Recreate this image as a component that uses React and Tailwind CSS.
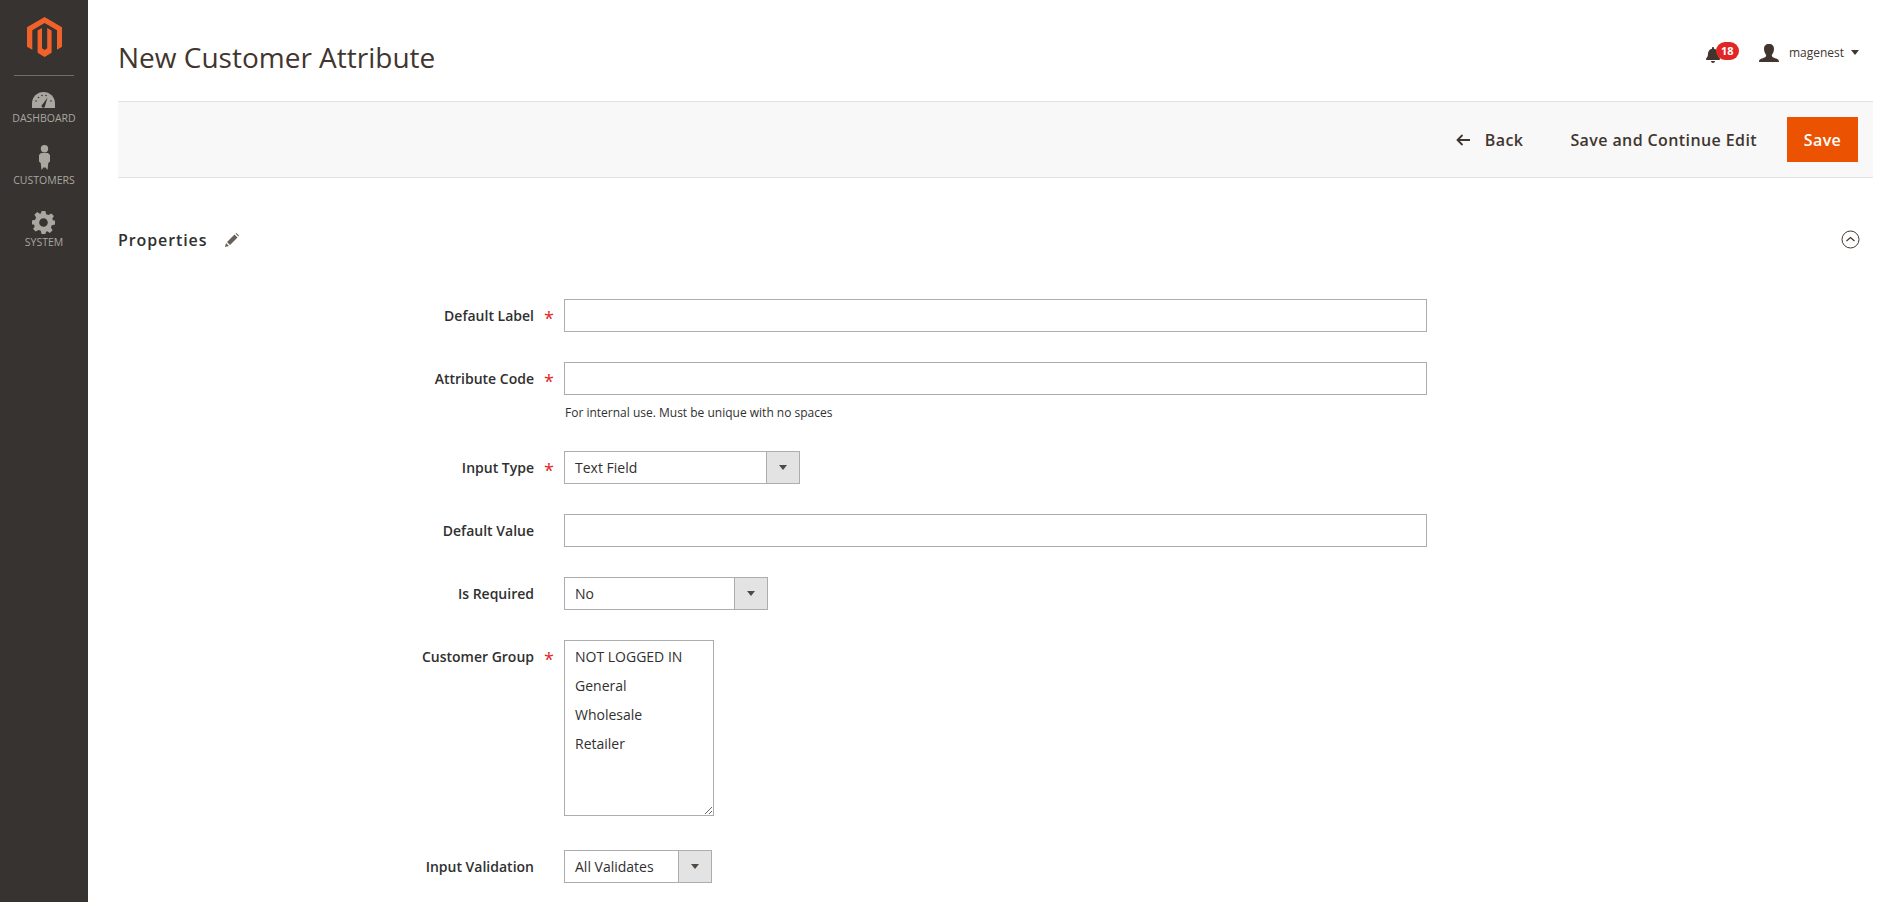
import { FaBell } from "react-icons/fa";

function Label({ text, required }) {
  return (
    <div className="w-[564px] shrink-0 flex justify-end h-[33px] items-center">
      <span className="text-[14px] font-semibold text-[#303030]">{text}</span>
      <span className="w-[30px] pt-[6px] text-[#e22626] text-[18px] text-center leading-[27px]">{required ? "*" : ""}</span>
    </div>
  );
}

function Select({ value, width }) {
  return (
    <div className={`flex h-[33px] border border-[#adadad] bg-white ${width}`}>
      <div className="flex-1 pl-[10px] text-[14px] leading-[31px] text-[#303030]">{value}</div>
      <div className="w-[33px] border-l border-[#adadad] bg-[#e3e3e3] flex items-center justify-center">
        <div className="w-0 h-0 border-x-[4px] border-x-transparent border-t-[5px] border-t-[#514943]" />
      </div>
    </div>
  );
}

function Row({ text, required, children, className }) {
  return (
    <div className={`flex ${className}`}>
      <Label text={text} required={required} />
      {children}
    </div>
  );
}

function NavItem({ icon, label, className }) {
  return (
    <div className={`flex flex-col items-center ${className}`}>
      {icon}
      <span className="text-[10.5px] leading-[14px] text-[#aaa6a0] uppercase">{label}</span>
    </div>
  );
}

const Input = () => <input className="w-[863px] h-[33px] border border-[#adadad] bg-white outline-none" />;

export default function App() {
  return (
    <div className="flex h-[902px] overflow-hidden bg-white font-['Open_Sans',sans-serif] text-[#303030]">
      <aside className="w-[88px] shrink-0 bg-[#373330] flex flex-col items-center">
        <svg className="mt-[17px]" width="35" height="40" viewBox="0 0 35 40" fill="#f1622a">
          <polygon points="17.6,0 35,10.3 35,29.7 30,32.7 30,13.3 17.6,6 5.3,13.3 5.3,32.7 0,29.7 0,10.3" />
          <polygon points="10.6,13.6 15,11 15,31.3 17.6,33 20.2,31.3 20.2,11 24.6,13.6 24.6,35.7 17.6,40 10.6,35.7" />
        </svg>
        <div className="w-[60px] h-px bg-[#736e69] mt-[18px]" />
        <NavItem
          className="mt-[16px]"
          label="Dashboard"
          icon={
            <svg width="23" height="16" viewBox="0 0 23 16" className="mb-[3px]">
              <path d="M0 16V11.5A11.5 11.5 0 0 1 23 11.5V16Z" fill="#aaa6a0" />
              <path d="M9.8 13.5L15.5 5.5L12.8 14.8Z" fill="#373330" />
              <circle cx="11.3" cy="14" r="1.8" fill="#373330" />
              <g fill="#373330">
                <circle cx="4" cy="9" r=".8" />
                <circle cx="6.5" cy="5.5" r=".8" />
                <circle cx="10" cy="3.5" r=".8" />
                <circle cx="14" cy="3.5" r=".8" />
                <circle cx="19" cy="9" r=".8" />
              </g>
            </svg>
          }
        />
        <NavItem
          className="mt-[20px]"
          label="Customers"
          icon={
            <svg width="11" height="25" viewBox="0 0 11 25" fill="#aaa6a0" className="mb-[3px]">
              <circle cx="5.5" cy="3.7" r="3.7" />
              <path d="M2 8H9L11 10V16.5L9.3 18L8.5 25L6.5 22.5H4.5L2.5 25L1.7 18L0 16.5V10Z" />
            </svg>
          }
        />
        <NavItem
          className="mt-[24px]"
          label="System"
          icon={
            <svg width="23" height="23" viewBox="0 0 24 24" fill="#aaa6a0" className="mb-[1px]">
              <path
                fillRule="evenodd"
                d="M10 0H14L14.8 3.3L17.2 4.3L20.1 2.5L22.9 5.3L21.1 8.2L22.1 9.8L24 10V14L20.7 14.8L19.7 17.2L21.5 20.1L18.7 22.9L15.8 21.1L14.6 21.6L14 24H10L9.2 20.7L6.8 19.7L3.9 21.5L1.1 18.7L2.9 15.8L1.9 14.2L0 14V10L3.3 9.2L4.3 6.8L2.5 3.9L5.3 1.1L8.2 2.9L9.4 2.4ZM12 7.5A4.5 4.5 0 1 0 12 16.5A4.5 4.5 0 1 0 12 7.5Z"
              />
            </svg>
          }
        />
      </aside>

      <main className="flex-1 min-w-0 pl-[30px] pr-[27px]">
        <header className="flex items-center justify-between h-[101px] pr-[14px]">
          <h1 className="mt-[12px] text-[28px] font-normal text-[#41362f]">New Customer Attribute</h1>
          <div className="flex items-center mt-[4px]">
            <div className="relative mt-[4px]">
              <FaBell className="text-[#41362f] text-[16px]" />
              <span className="absolute -top-[5px] left-[11px] w-[23px] h-[18px] rounded-full bg-[#e22626] text-white text-[11px] font-bold leading-[18px] text-center">18</span>
            </div>
            <svg width="20" height="18" viewBox="0 0 20 18" fill="#41362f" className="ml-[38px] mr-[10px]">
              <path d="M10 0C13.5 0 15 2 15 5C15 8 13.5 10 12.8 11C12.8 12.5 13.5 13 15 13.8C18 15 20 15 20 18H0C0 15 2 15 5 13.8C6.5 13 7.2 12.5 7.2 11C6.5 10 5 8 5 5C5 2 6.5 0 10 0Z" />
            </svg>
            <span className="text-[12px] text-[#41362f]">magenest</span>
            <div className="ml-[7px] w-0 h-0 border-x-[4px] border-x-transparent border-t-[5px] border-t-[#41362f]" />
          </div>
        </header>

        <div className="h-[77px] bg-[#f8f8f8] border-y border-[#e3e3e3] flex items-center justify-end pr-[15px] text-[16px] font-semibold tracking-[0.4px] text-[#41362f]">
          <svg width="14" height="12" viewBox="0 0 14 12" fill="none" stroke="#41362f" strokeWidth="1.8" className="mr-[15px]">
            <path d="M14 6H1.5M6.5 1L1.5 6L6.5 11" />
          </svg>
          <span className="mr-[47px]">Back</span>
          <span className="mr-[30px]">Save and Continue Edit</span>
          <button className="w-[71px] h-[45px] bg-[#eb5202] text-white font-semibold">Save</button>
        </div>

        <div className="flex items-center justify-between h-[67px] mt-[28px] mb-[27px] pr-[13px]">
          <div className="flex items-center">
            <h2 className="text-[16px] font-semibold tracking-[0.9px] text-[#303030]">Properties</h2>
            <svg width="14" height="14" viewBox="0 0 14 14" fill="#676056" className="ml-[18px]">
              <path d="M0 14L1 10L4 13ZM2 9L9.5 1.5L12.5 4.5L5 12ZM10.5 .5L11.5 0L14 2.5L13.5 3.5Z" />
            </svg>
          </div>
          <svg width="19" height="19" viewBox="0 0 19 19" fill="none" stroke="#41362f" strokeWidth="1">
            <circle cx="9.5" cy="9.5" r="8.5" />
            <path d="M5.5 11L9.5 7.5L13.5 11" strokeWidth="1.2" />
          </svg>
        </div>

        <div className="ml-[-118px] -mt-[1px]">
          <Row text="Default Label" required className="mb-[30px]"><Input /></Row>
          <Row text="Attribute Code" required className="mb-[9px]"><Input /></Row>
          <div className="pl-[565px] h-[47px] text-[12px] leading-[18px] text-[#303030]">For internal use. Must be unique with no spaces</div>
          <Row text="Input Type" required className="mb-[30px]"><Select value="Text Field" width="w-[236px]" /></Row>
          <Row text="Default Value" className="mb-[30px]"><Input /></Row>
          <Row text="Is Required" className="mb-[30px]"><Select value="No" width="w-[204px]" /></Row>
          <Row text="Customer Group" required className="mb-[34px]">
            <div className="w-[150px] h-[176px] border border-[#adadad] bg-white pl-[10px] pt-[1px] text-[14px] leading-[29px] resize overflow-auto">
              <div>NOT LOGGED IN</div>
              <div>General</div>
              <div>Wholesale</div>
              <div>Retailer</div>
            </div>
          </Row>
          <Row text="Input Validation"><Select value="All Validates" width="w-[148px]" /></Row>
        </div>
      </main>
    </div>
  );
}
